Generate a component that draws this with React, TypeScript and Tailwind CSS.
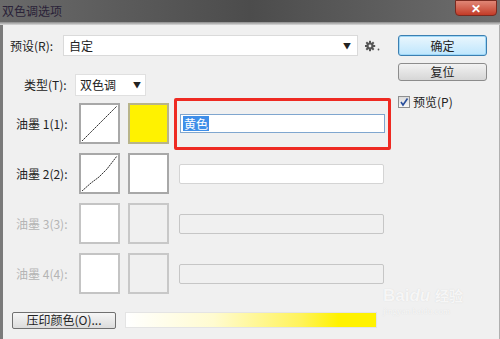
import React from "react";

const F = { fontFamily: '"Noto Sans CJK SC", "Liberation Sans", sans-serif' };

function Curve({ wavy, disabled }: { wavy?: boolean; disabled?: boolean }) {
  return (
    <div className={`w-[41px] h-[41px] bg-white border-2 ${disabled ? "border-[#c4c4c4]" : "border-[#a8a8a8]"} box-border`}>
      {!disabled && (
        <svg width="37" height="37" viewBox="0 0 37 37">
          {wavy ? (
            <path d="M1 36 L10 28 L18 22 L26 14 L36 1" stroke="#333" strokeWidth="1" fill="none" strokeDasharray="2 0.6" />
          ) : (
            <path d="M1 36 L36 1" stroke="#333" strokeWidth="1" fill="none" strokeDasharray="2 0.6" />
          )}
        </svg>
      )}
    </div>
  );
}

function InkRow({ n, color, wavy, disabled, children }: { n: number; color?: string; wavy?: boolean; disabled?: boolean; children?: React.ReactNode }) {
  return (
    <div className="flex items-center h-[41px]">
      <div className={`w-[70px] pl-[13px] text-[12px] ${disabled ? "text-[#b4b4b4]" : "text-[#222]"}`}>油墨 {n}({n}):</div>
      <div className="ml-[6px]"><Curve wavy={wavy} disabled={disabled} /></div>
      <div
        className={`ml-[8px] w-[41px] h-[41px] border-2 box-border ${disabled ? "border-[#c8c8c8] bg-[#f0f0f0]" : color ? "border-[#b8b48a]" : "border-[#a8a8a8] bg-white"}`}
        style={color ? { background: color } : undefined}
      />
      <div className="ml-[10px] flex-1">{children}</div>
    </div>
  );
}

export default function App() {
  return (
    <div className="w-[500px] h-[339px] overflow-hidden bg-[#f0f0f0] relative text-[12px] text-[#222]" style={F}>
      {/* title bar */}
      <div className="h-[22px] flex items-center justify-between bg-gradient-to-r from-[#6a6a6a] via-[#4c4c4c] to-[#6e6e6e]">
        <span className="pl-[2px] text-[12px] text-[#2a2238] leading-none">双色调选项</span>
        <div className="self-start mr-[3px] w-[42px] h-[16px] rounded-b-[4px] bg-gradient-to-b from-[#e08676] to-[#c23a26] border border-[#7a2a20] flex items-center justify-center text-white text-[12px] font-bold leading-none">✕</div>
      </div>
      <div className="h-[3px] bg-gradient-to-b from-[#8a8a8a] to-[#dcdcdc]" />

      <div className="flex h-[314px] border-l-[3px] border-l-[#7a7a7a] border-r border-r-[#b0b0b0]">
        {/* left content */}
        <div className="w-[392px] flex flex-col">
          {/* preset */}
          <div className="flex items-center mt-[10px] h-[21px]">
            <span className="pl-[7px] w-[60px] text-[12px]">预设(R):</span>
            <div className="w-[295px] h-[21px] bg-white border border-[#dadada] flex items-center justify-between px-[5px]">
              <span className="text-[12px]">自定</span>
              <span className="text-[8px] text-[#222] mr-[1px]">▼</span>
            </div>
            <svg className="ml-[7px]" width="16" height="12" viewBox="0 0 16 12">
              <g transform="translate(5,6)" fill="#555">
                <circle r="3.6" />
                {[0, 45, 90, 135, 180, 225, 270, 315].map((a) => (
                  <rect key={a} x="-1" y="-5.2" width="2" height="2.4" transform={`rotate(${a})`} />
                ))}
                <circle r="1.4" fill="#f0f0f0" />
              </g>
              <circle cx="13.5" cy="9.5" r="0.9" fill="#555" />
            </svg>
          </div>
          {/* type */}
          <div className="flex items-center mt-[18px] h-[22px]">
            <span className="pl-[21px] w-[72px] text-[12px]">类型(T):</span>
            <div className="w-[71px] h-[22px] bg-white border border-[#e0e0e0] flex items-center justify-between px-[4px]">
              <span className="text-[12px]">双色调</span>
              <span className="text-[8px]">▼</span>
            </div>
          </div>
          {/* inks */}
          <div className="mt-[7px] flex flex-col gap-[9px]">
            <InkRow n={1} color="#fff200">
              <div className="-ml-[5px] -my-[5px] w-[217px] h-[52px] border-[3px] border-[#ee2a22] rounded-[2px] flex items-center px-[3px]">
                <div className="w-[205px] h-[19px] bg-white border border-[#7fa6cf] flex items-center px-[2px]">
                  <span className="bg-[#3f8ee8] text-white text-[12px] leading-[15px] px-[1px]">黄色</span>
                </div>
              </div>
            </InkRow>
            <InkRow n={2} wavy>
              <div className="w-[205px] h-[20px] bg-white border border-[#d4d4d4] rounded-[2px]" />
            </InkRow>
            <InkRow n={3} disabled>
              <div className="w-[205px] h-[20px] bg-[#f0f0f0] border border-[#c6c6c6] rounded-[2px]" />
            </InkRow>
            <InkRow n={4} disabled>
              <div className="w-[205px] h-[20px] bg-[#f0f0f0] border border-[#c6c6c6] rounded-[2px]" />
            </InkRow>
          </div>
          {/* overprint */}
          <div className="flex items-center mt-[17px] h-[18px]">
            <div className="ml-[9px] w-[104px] h-[17px] border border-[#707070] rounded-[2px] bg-gradient-to-b from-[#f6f6f6] to-[#dcdcdc] flex items-center justify-center text-[12px] leading-none">压印颜色(O)...</div>
            <div className="ml-[9px] w-[252px] h-[16px] border border-[#e4e4e4]" style={{ backgroundImage: "linear-gradient(to right,#ffffff 0%,#fffbd0 35%,#fff35a 70%,#fff200 85%,#fff200 100%)" }} />
          </div>
        </div>
        {/* right buttons */}
        <div className="flex flex-col ml-[3px] pt-[10px]">
          <div className="w-[89px] h-[21px] rounded-[3px] border border-[#3c7fb1] bg-gradient-to-b from-[#eaf6fd] to-[#bee6fd] shadow-[inset_0_0_0_1px_#9fd8f8] flex items-center justify-center text-[12px]">确定</div>
          <div className="mt-[7px] w-[89px] h-[18px] rounded-[3px] border border-[#8c8c8c] bg-gradient-to-b from-[#f2f2f2] to-[#d6d6d6] flex items-center justify-center text-[12px] leading-none">复位</div>
          <div className="mt-[12px] flex items-center gap-[3px]">
            <div className="w-[12px] h-[12px] border border-[#8e8f8f] bg-gradient-to-b from-[#dcdcdc] to-[#f8f8f8] flex items-center justify-center">
              <svg width="10" height="10" viewBox="0 0 10 10"><path d="M2 5 L4 8 L8.5 1.5" stroke="#2a4f9c" strokeWidth="1.6" fill="none" /></svg>
            </div>
            <span className="text-[12px]">预览(P)</span>
          </div>
        </div>
      </div>

      {/* watermark */}
      <div className="absolute left-[383px] top-[287px] text-white/80 leading-none pointer-events-none" style={{ textShadow: "0 0 1px #cfcfcf" }}>
        <div className="text-[17px] font-bold" style={{ fontFamily: '"Liberation Sans", sans-serif' }}>Bai<span className="italic">du</span> <span className="text-[14px]" style={F}>经验</span></div>
        <div className="text-[9px] mt-[3px]" style={{ fontFamily: '"Liberation Serif", serif' }}>jingyan.baidu.com</div>
      </div>
    </div>
  );
}
